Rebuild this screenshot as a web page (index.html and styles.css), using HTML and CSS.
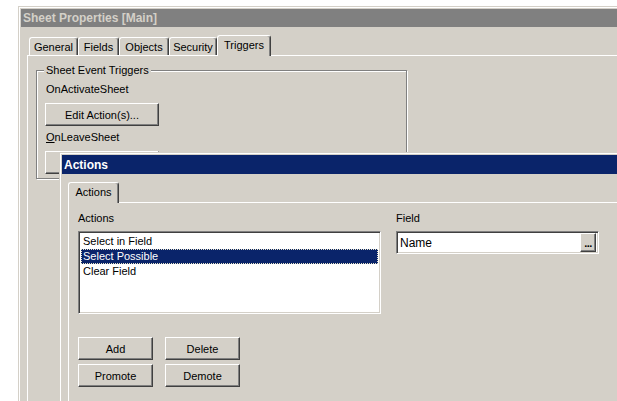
FILE: index.html
```html
<!DOCTYPE html>
<html>
<head>
<meta charset="utf-8">
<link rel="stylesheet" href="styles.css">
</head>
<body>
<div class="desktop">
  <div class="window win-main">
    <div class="titlebar inactive">Sheet Properties [Main]</div>
    <div class="win-body">
      <div class="tabs">
        <div class="tab w-general">General</div>
        <div class="tab w-fields">Fields</div>
        <div class="tab w-objects">Objects</div>
        <div class="tab w-security">Security</div>
        <div class="tab selected w-triggers">Triggers</div>
      </div>
      <div class="panel main-panel">
        <div class="group">
          <span class="group-label">Sheet Event Triggers</span>
          <div class="label">OnActivateSheet</div>
          <button class="btn btn-edit">Edit Action(s)...</button>
          <div class="label second"><u>O</u>nLeaveSheet</div>
          <button class="btn btn-edit" aria-label="Edit Action(s)..."></button>
        </div>
      </div>
    </div>
  </div>

  <div class="window win-dialog">
    <div class="titlebar active">Actions</div>
    <div class="win-body">
      <div class="tabs">
        <div class="tab selected first w-actions">Actions</div>
      </div>
      <div class="panel dlg-panel">
        <div class="columns">
          <div class="col col-left">
            <div class="label">Actions</div>
            <div class="listbox">
              <div class="item">Select in Field</div>
              <div class="item sel">Select Possible</div>
              <div class="item">Clear Field</div>
            </div>
          </div>
          <div class="col col-right">
            <div class="label">Field</div>
            <div class="textbox">
              <span class="tb-text">Name</span>
              <span class="btn dots">...</span>
            </div>
          </div>
        </div>
        <div class="btn-grid">
          <button class="btn">Add</button>
          <button class="btn">Delete</button>
          <button class="btn">Promote</button>
          <button class="btn">Demote</button>
        </div>
      </div>
    </div>
  </div>
</div>
</body>
</html>
```

FILE: styles.css
```css
html, body {
  margin: 0;
  padding: 0;
  background: #ffffff;
}
body {
  width: 617px;
  height: 401px;
  overflow: hidden;
  font-family: "Liberation Sans", Arial, sans-serif;
  font-size: 11px;
  color: #000;
}
.desktop {
  position: relative;
  width: 617px;
  height: 401px;
  overflow: hidden;
}
.window {
  position: absolute;
  box-sizing: border-box;
  background: #d4d0c8;
  border: 1px solid;
  border-color: #d4d0c8 #404040 #404040 #d4d0c8;
  box-shadow: inset 1px 1px #ffffff, inset -1px -1px #808080;
  padding: 2px;
  display: flex;
  flex-direction: column;
}
.win-main {
  left: 18px;
  top: 6px;
  width: 720px;
  height: 520px;
}
.win-dialog {
  left: 59px;
  top: 152px;
  width: 640px;
  height: 400px;
  z-index: 5;
}
.titlebar {
  height: 18px;
  flex: none;
  display: flex;
  align-items: center;
  padding-left: 2px;
  font-weight: bold;
  font-size: 12px;
}
.titlebar.inactive {
  background: #808080;
  color: #d4d0c8;
}
.titlebar.active {
  background: #0a246a;
  color: #ffffff;
  height: 19px;
}
.win-body {
  flex: 1;
  display: flex;
  flex-direction: column;
  padding: 8px 6px 0 6px;
}
.tabs {
  display: flex;
  align-items: flex-end;
  height: 20px;
  padding-left: 2px;
  position: relative;
  z-index: 1;
  flex: none;
}
.tab {
  box-sizing: border-box;
  height: 18px;
  border: 1px solid;
  border-color: #ffffff #404040 transparent #ffffff;
  border-bottom: none;
  box-shadow: inset -1px 0 #808080;
  border-radius: 3px 3px 0 0;
  display: flex;
  align-items: center;
  justify-content: center;
  background: #d4d0c8;
  padding-top: 1px;
}
.tab.selected {
  height: 21px;
  margin-bottom: -1px;
  padding-top: 0;
  padding-bottom: 3px;
}
.tab.first {
  margin-left: -2px;
}
.w-general { width: 49px; }
.w-fields { width: 41px; }
.w-objects { width: 50px; }
.w-security { width: 48px; }
.w-triggers { width: 54px; }
.w-actions { width: 51px; }

.panel {
  flex: 1;
  border: 1px solid;
  border-color: #ffffff #404040 #404040 #ffffff;
  box-shadow: inset -1px -1px #808080;
}
.main-panel {
  padding: 14px 8px;
}
.group {
  position: relative;
  box-sizing: border-box;
  width: 371px;
  height: 109px;
  border: 1px solid #808080;
  box-shadow: inset 1px 1px #ffffff, 1px 1px #ffffff;
  padding: 12px 8px 0 8px;
  display: flex;
  flex-direction: column;
  align-items: flex-start;
}
.group-label {
  position: absolute;
  top: -7px;
  left: 7px;
  padding: 0 2px;
  line-height: 13px;
  background: #d4d0c8;
}
.label {
  line-height: 13px;
  height: 13px;
  padding-left: 1px;
}
.btn {
  font: inherit;
  color: #000;
  background: #d4d0c8;
  box-sizing: border-box;
  border: 1px solid;
  border-color: #ffffff #404040 #404040 #ffffff;
  box-shadow: inset -1px -1px #808080;
  padding: 0;
  margin: 0;
  height: 23px;
  display: flex;
  align-items: center;
  justify-content: center;
}
.btn-edit {
  width: 114px;
  margin-top: 7px;
}
.label.second {
  margin-top: 5px;
}

.dlg-panel {
  padding: 9px 9px;
  display: flex;
  flex-direction: column;
}
.columns {
  display: flex;
  gap: 15px;
}
.col {
  display: flex;
  flex-direction: column;
  gap: 6px;
}
.col-left .label, .col-right .label {
  padding-left: 0;
}
.listbox {
  box-sizing: border-box;
  width: 303px;
  height: 83px;
  background: #ffffff;
  border: 1px solid;
  border-color: #808080 #ffffff #ffffff #808080;
  box-shadow: inset 1px 1px #404040, inset -1px -1px #d4d0c8;
  padding: 2px 2px;
}
.item {
  height: 15px;
  line-height: 15px;
  padding-left: 2px;
  box-sizing: border-box;
}
.item.sel {
  background: #0a246a;
  color: #ffffff;
  outline: 1px dotted #e8e4c8;
  outline-offset: -1px;
}
.textbox {
  box-sizing: border-box;
  width: 203px;
  height: 23px;
  background: #ffffff;
  border: 1px solid;
  border-color: #808080 #ffffff #ffffff #808080;
  box-shadow: inset 1px 1px #404040, inset -1px -1px #d4d0c8;
  padding: 2px 2px 2px 2px;
  display: flex;
  align-items: center;
}
.tb-text {
  flex: 1;
  padding-left: 1px;
  font-size: 12px;
}
.btn.dots {
  width: 16px;
  height: 19px;
  font-weight: bold;
  font-size: 11px;
  align-items: flex-end;
  line-height: 12px;
  padding-bottom: 2px;
  letter-spacing: -0.5px;
}
.btn-grid {
  display: grid;
  grid-template-columns: 75px 75px;
  gap: 4px 12px;
  margin-top: 23px;
}
```
